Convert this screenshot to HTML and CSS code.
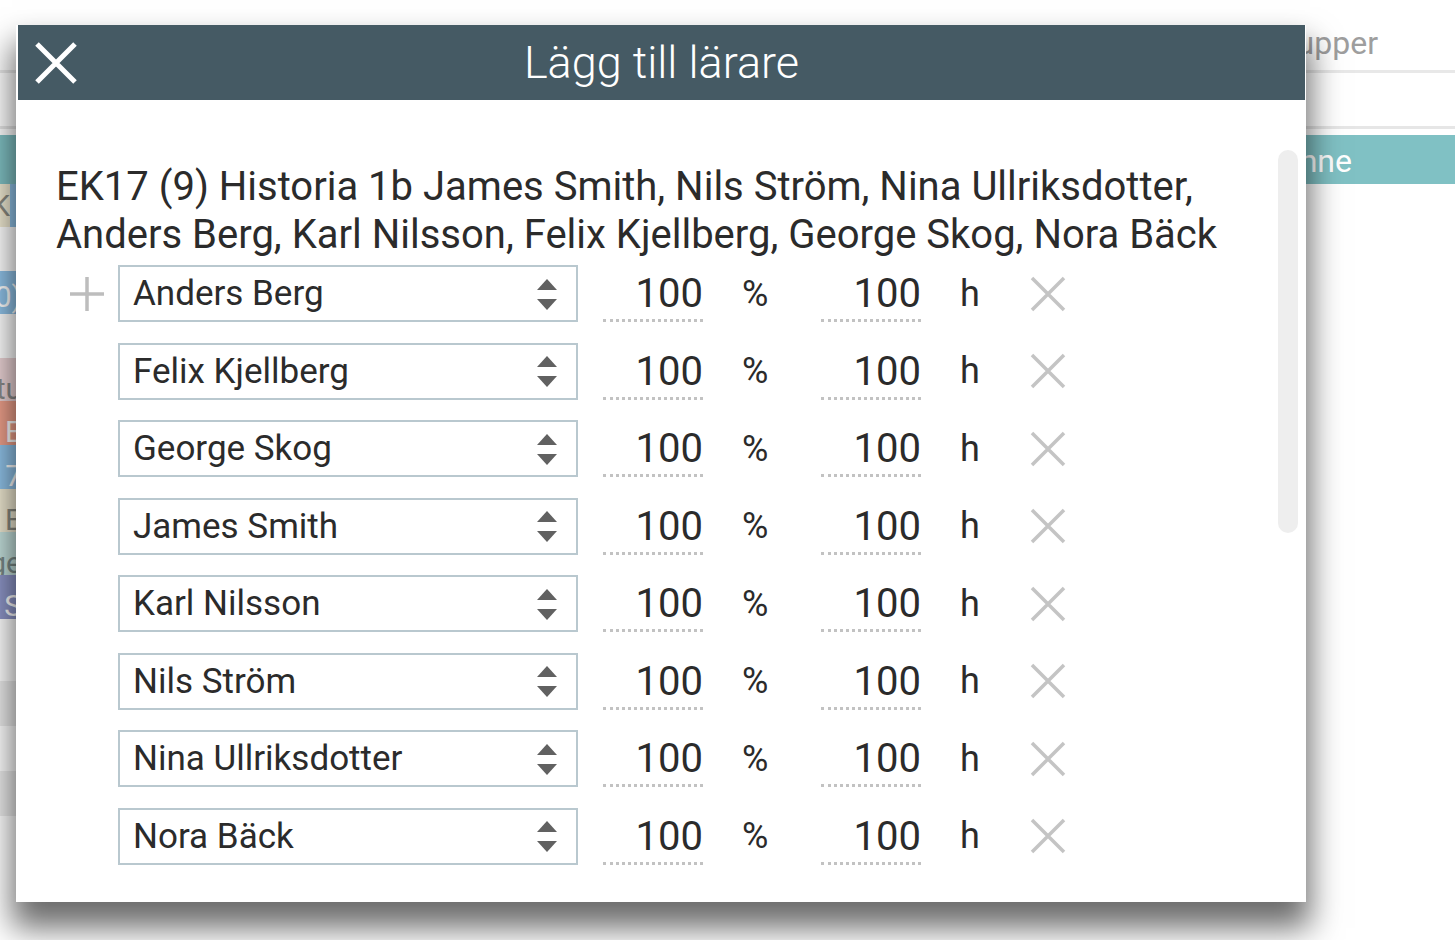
FILE: index.html
```html
<!DOCTYPE html>
<html lang="sv">
<head>
<meta charset="utf-8">
<title>Lägg till lärare</title>
<link rel="stylesheet" href="styles.css">
</head>
<body>
<div class="page">
  <div class="topbar"><span class="tab">Grupper</span></div>
  <div class="subbar"></div>
  <div class="band"><span class="band-text">Inne</span></div>
  <div class="grid">
    <div class="cell split"><span class="c beige">K</span><span class="c blue"></span></div>
    <div class="cell h44"></div>
    <div class="cell blue h43 low"><span>0)</span></div>
    <div class="cell h44"></div>
    <div class="cell pink h43 lower"><span>tu</span></div>
    <div class="cell salmon h44 lower"><span>E</span></div>
    <div class="cell blue h44 lower"><span>17</span></div>
    <div class="cell beige h43 lower"><span>E</span></div>
    <div class="cell lteal h43 lower"><span>ge</span></div>
    <div class="cell purple h44 lower"><span>S</span></div>
    <div class="cell h62"></div>
    <div class="cell grey h45"></div>
    <div class="cell h45"></div>
    <div class="cell grey h45"></div>
  </div>
</div>

<div class="dialog">
  <div class="dialog-header">
    <svg class="close" viewBox="0 0 44 44" width="44" height="44"><path d="M3 3 L41 41 M41 3 L3 41" stroke="#fff" stroke-width="5" fill="none"/></svg>
    <h1 class="title">Lägg till lärare</h1>
  </div>
  <div class="dialog-body">
    <p class="course">EK17 (9) Historia 1b James Smith, Nils Ström, Nina Ullriksdotter, Anders Berg, Karl Nilsson, Felix Kjellberg, George Skog, Nora Bäck</p>
    <div class="rows">
      <div class="row">
        <div class="add"><svg viewBox="0 0 36 36" width="36" height="36"><path d="M18 1 V35 M1 18 H35" stroke="#bdbdbd" stroke-width="3.5" fill="none"/></svg></div>
        <div class="select"><span>Anders Berg</span><svg viewBox="0 0 20 32" width="20" height="32"><polygon points="10,0 20,11 0,11" fill="#616161"/><polygon points="0,20 20,20 10,31" fill="#616161"/></svg></div>
        <div class="num">100</div><div class="unit pct">%</div>
        <div class="num">100</div><div class="unit hrs">h</div>
        <svg class="remove" viewBox="0 0 36 36" width="36" height="36"><path d="M2 2 L34 34 M34 2 L2 34" stroke="#c4c4c4" stroke-width="3.5" fill="none"/></svg>
      </div>
      <div class="row">
        <div class="add"></div>
        <div class="select"><span>Felix Kjellberg</span><svg viewBox="0 0 20 32" width="20" height="32"><polygon points="10,0 20,11 0,11" fill="#616161"/><polygon points="0,20 20,20 10,31" fill="#616161"/></svg></div>
        <div class="num">100</div><div class="unit pct">%</div>
        <div class="num">100</div><div class="unit hrs">h</div>
        <svg class="remove" viewBox="0 0 36 36" width="36" height="36"><path d="M2 2 L34 34 M34 2 L2 34" stroke="#c4c4c4" stroke-width="3.5" fill="none"/></svg>
      </div>
      <div class="row">
        <div class="add"></div>
        <div class="select"><span>George Skog</span><svg viewBox="0 0 20 32" width="20" height="32"><polygon points="10,0 20,11 0,11" fill="#616161"/><polygon points="0,20 20,20 10,31" fill="#616161"/></svg></div>
        <div class="num">100</div><div class="unit pct">%</div>
        <div class="num">100</div><div class="unit hrs">h</div>
        <svg class="remove" viewBox="0 0 36 36" width="36" height="36"><path d="M2 2 L34 34 M34 2 L2 34" stroke="#c4c4c4" stroke-width="3.5" fill="none"/></svg>
      </div>
      <div class="row">
        <div class="add"></div>
        <div class="select"><span>James Smith</span><svg viewBox="0 0 20 32" width="20" height="32"><polygon points="10,0 20,11 0,11" fill="#616161"/><polygon points="0,20 20,20 10,31" fill="#616161"/></svg></div>
        <div class="num">100</div><div class="unit pct">%</div>
        <div class="num">100</div><div class="unit hrs">h</div>
        <svg class="remove" viewBox="0 0 36 36" width="36" height="36"><path d="M2 2 L34 34 M34 2 L2 34" stroke="#c4c4c4" stroke-width="3.5" fill="none"/></svg>
      </div>
      <div class="row">
        <div class="add"></div>
        <div class="select"><span>Karl Nilsson</span><svg viewBox="0 0 20 32" width="20" height="32"><polygon points="10,0 20,11 0,11" fill="#616161"/><polygon points="0,20 20,20 10,31" fill="#616161"/></svg></div>
        <div class="num">100</div><div class="unit pct">%</div>
        <div class="num">100</div><div class="unit hrs">h</div>
        <svg class="remove" viewBox="0 0 36 36" width="36" height="36"><path d="M2 2 L34 34 M34 2 L2 34" stroke="#c4c4c4" stroke-width="3.5" fill="none"/></svg>
      </div>
      <div class="row">
        <div class="add"></div>
        <div class="select"><span>Nils Ström</span><svg viewBox="0 0 20 32" width="20" height="32"><polygon points="10,0 20,11 0,11" fill="#616161"/><polygon points="0,20 20,20 10,31" fill="#616161"/></svg></div>
        <div class="num">100</div><div class="unit pct">%</div>
        <div class="num">100</div><div class="unit hrs">h</div>
        <svg class="remove" viewBox="0 0 36 36" width="36" height="36"><path d="M2 2 L34 34 M34 2 L2 34" stroke="#c4c4c4" stroke-width="3.5" fill="none"/></svg>
      </div>
      <div class="row">
        <div class="add"></div>
        <div class="select"><span>Nina Ullriksdotter</span><svg viewBox="0 0 20 32" width="20" height="32"><polygon points="10,0 20,11 0,11" fill="#616161"/><polygon points="0,20 20,20 10,31" fill="#616161"/></svg></div>
        <div class="num">100</div><div class="unit pct">%</div>
        <div class="num">100</div><div class="unit hrs">h</div>
        <svg class="remove" viewBox="0 0 36 36" width="36" height="36"><path d="M2 2 L34 34 M34 2 L2 34" stroke="#c4c4c4" stroke-width="3.5" fill="none"/></svg>
      </div>
      <div class="row">
        <div class="add"></div>
        <div class="select"><span>Nora Bäck</span><svg viewBox="0 0 20 32" width="20" height="32"><polygon points="10,0 20,11 0,11" fill="#616161"/><polygon points="0,20 20,20 10,31" fill="#616161"/></svg></div>
        <div class="num">100</div><div class="unit pct">%</div>
        <div class="num">100</div><div class="unit hrs">h</div>
        <svg class="remove" viewBox="0 0 36 36" width="36" height="36"><path d="M2 2 L34 34 M34 2 L2 34" stroke="#c4c4c4" stroke-width="3.5" fill="none"/></svg>
      </div>
    </div>
    <div class="scroll-thumb"></div>
  </div>
</div>
</body>
</html>
```

FILE: styles.css
```css
* { box-sizing: border-box; }
html, body { margin: 0; padding: 0; }
body {
  width: 1455px;
  height: 940px;
  overflow: hidden;
  background: #fff;
  font-family: Roboto, "Liberation Sans", sans-serif;
  position: relative;
}

/* background page */
.page { width: 100%; }
.topbar {
  height: 73px;
  border-bottom: 3px solid #e8e8e8;
  display: flex;
  justify-content: flex-end;
  align-items: flex-start;
  padding: 27px 77px 0 0;
}
.tab { font-size: 32px; line-height: 32px; color: #9e9e9e; }
.subbar { height: 56px; border-bottom: 3px solid #e6e6e6; }
.band {
  margin-top: 6px;
  height: 49px;
  background: #80c1c4;
  display: flex;
  justify-content: flex-end;
  align-items: center;
  padding: 2px 103px 0 0;
}
.band-text { font-size: 32px; color: #fff; }
.grid { width: 18px; display: flex; flex-direction: column; overflow: hidden; }
.cell {
  width: 18px;
  display: flex;
  align-items: center;
  justify-content: flex-end;
  overflow: hidden;
  font-size: 30px;
  line-height: 34px;
  color: #fff;
  white-space: nowrap;
}
.cell.low { padding-top: 8px; }
.cell.lower { padding-top: 18px; }
.cell span { margin-right: -4px; }
.split { height: 43px; justify-content: flex-start; }
.split .c { height: 43px; display: flex; align-items: center; overflow: hidden; margin: 0; justify-content: flex-end; }
.split .c.beige { width: 10px; color: #8a8a80; }
.split .c.blue { width: 8px; }
.beige { background: #efe9d2; color: #8a8a80; }
.blue { background: #90c2e8; }
.pink { background: #ecd4d6; color: #8a8a8a; }
.salmon { background: #eea08b; }
.lteal { background: #c4e0dc; color: #7a8a88; }
.purple { background: #8e96c8; }
.grey { background: #ececec; }
.h43 { height: 43px; }
.h44 { height: 44px; }
.h45 { height: 45px; }
.h62 { height: 62px; }

/* dialog overlay */
.dialog {
  position: absolute;
  left: 16px;
  top: 25px;
  width: 1290px;
  height: 877px;
  background: #fff;
  box-shadow: 0 22px 30px 4px rgba(0, 0, 0, 0.58);
  display: flex;
  flex-direction: column;
}
.dialog-header {
  height: 75px;
  margin: 0 1px 0 2px;
  background: #455a64;
  display: flex;
  align-items: center;
  position: relative;
}
.close { margin-left: 16px; }
.title {
  position: absolute;
  left: 0;
  right: 0;
  top: 0;
  margin: 0;
  text-align: center;
  line-height: 75px;
  font-size: 45px;
  font-weight: 300;
  color: #fff;
  pointer-events: none;
}
.dialog-body {
  flex: 1;
  position: relative;
  padding: 63px 30px 0 40px;
}
.course {
  margin: 0;
  font-size: 40px;
  line-height: 48px;
  color: #2b2b2b;
  width: 1210px;
}
.rows { margin-top: 6px; }
.row {
  display: flex;
  align-items: center;
  height: 57px;
  margin-bottom: 20.5px;
}
.add { width: 62px; height: 57px; display: flex; align-items: center; padding-left: 13px; }
.select {
  width: 460px;
  height: 57px;
  border: 2px solid #b9c8cf;
  display: flex;
  align-items: center;
  justify-content: space-between;
  padding: 0 19px 0 13px;
  font-size: 35px;
  color: #2b2b2b;
}
.select svg { margin-top: 2px; }
.num {
  width: 100px;
  height: 57px;
  display: flex;
  align-items: center;
  justify-content: flex-end;
  font-size: 40px;
  color: #2b2b2b;
  border-bottom: 3px dotted #c2c2c2;
  padding-top: 3px;
}
.select + .num { margin-left: 25px; }
.unit {
  padding-left: 39px;
  font-size: 36px;
  color: #2b2b2b;
}
.unit.pct { width: 118px; }
.unit.hrs { width: 109px; }
.scroll-thumb {
  position: absolute;
  right: 8px;
  top: 50px;
  width: 20px;
  height: 383px;
  border-radius: 10px;
  background: #eeeeee;
}
```
